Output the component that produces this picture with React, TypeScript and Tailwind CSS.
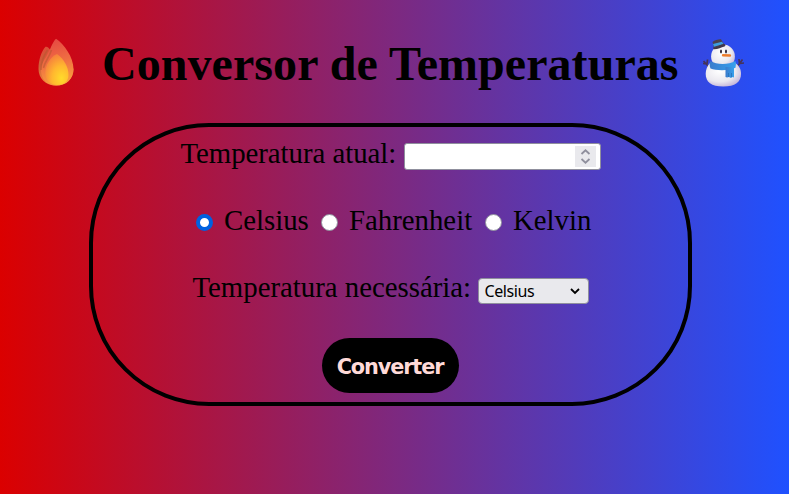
import React from "react";

function Flame() {
  return (
    <svg className="block h-12 w-9 shrink-0" viewBox="0 0 36 48">
      <defs>
        <linearGradient id="flameBack" x1="0" y1="0" x2="0.3" y2="1">
          <stop offset="0" stopColor="#e04a38" />
          <stop offset="0.45" stopColor="#d0603a" />
          <stop offset="1" stopColor="#f58b38" />
        </linearGradient>
        <linearGradient id="flameMain" x1="0.4" y1="0" x2="0.6" y2="1">
          <stop offset="0" stopColor="#e54843" />
          <stop offset="0.5" stopColor="#f06f42" />
          <stop offset="1" stopColor="#f9a43d" />
        </linearGradient>
        <radialGradient id="flameCore" cx="0.7" cy="0.78" r="0.8">
          <stop offset="0" stopColor="#ffdb2b" />
          <stop offset="0.5" stopColor="#ffb72f" />
          <stop offset="1" stopColor="#f6803d" />
        </radialGradient>
      </defs>
      <path d="M7.500 8.800C3.500 13 .5 22 .5 31c0 9 7 16.500 17.500 16.500S35.500 40 35.500 31L20 9 12 11.500C10.500 9.500 9 8.200 7.500 8.800Z" fill="url(#flameBack)" />
      <path d="M18 .700C26 6 35.500 19 35.500 31c0 10-7 16.500-17 16.500C9 47.500 3 41 3 32c0-7 4-10 7-17 3-5 4.500-11 8-14.300Z" fill="url(#flameMain)" />
      <path d="M9.500 12c-4 6-6.500 12-6.500 20M13.500 12C11 20 7 23 5.500 30" fill="none" stroke="#b5572f" strokeWidth="1.6" opacity=".55" />
      <path d="M19 16c7 5 11.500 13 11.500 21 0 6-4 10-11 10C12 47 7.300 42 7.300 35c0-8 5-16 11.700-19Z" fill="url(#flameCore)" />
    </svg>
  );
}

function Snowman() {
  return (
    <svg className="block h-12 w-[41px] shrink-0" viewBox="0 0 41 48">
      <defs>
        <radialGradient id="snowBody" cx="0.4" cy="0.35" r="0.75">
          <stop offset="0" stopColor="#fff" />
          <stop offset="0.6" stopColor="#eae8ef" />
          <stop offset="1" stopColor="#bba9d5" />
        </radialGradient>
        <linearGradient id="scarf" x1="0" y1="0" x2="1" y2="0">
          <stop offset="0" stopColor="#3a7ccc" />
          <stop offset="1" stopColor="#36a0ed" />
        </linearGradient>
      </defs>
      <path d="M6 28 .5 22M3.500 25l-3.500-.500M4 25l.500-4.500M34 28l5.500-7.500M36.500 25l-.500-5M37 24.500l4-.500" fill="none" stroke="#453359" strokeWidth="1.7" />
      <path d="M7 24c-3 3-4.300 7-4.300 11 0 8 5.500 12.500 17.500 12.500S38 43 38 35c0-5-2-8-5.500-11Z" fill="url(#snowBody)" />
      <circle cx="20" cy="17.500" r="11.900" fill="url(#snowBody)" />
      <path d="M7.500 22c6 4 18 4 25 0q1 3 0 6.800c-6 3-19 3.200-25 .700-1-2-1.200-5.500 0-7.500Z" fill="url(#scarf)" />
      <path d="M22.500 28H31v10.500l-1.500-.500-1.500 1-2-1-2 .500-1.500-.500Z" fill="url(#scarf)" />
      <path d="M25.500 34v4M28.500 34v4" stroke="#2771b8" strokeWidth=".8" />
      <ellipse cx="18" cy="12.500" rx="1" ry="1.900" fill="#342b3b" />
      <ellipse cx="23" cy="12.500" rx="1" ry="1.900" fill="#342b3b" />
      <path d="m19.500 15 8 .200q1.500 1.400 0 2.600l-8-.200q-1.500-1.200 0-2.600Z" fill="#ec7b2b" />
      <path d="M9.500 3C11.500 1 15.500 0 18 .200l3.500 5.800-10.500 3Z" fill="#4b4050" />
      <path d="m10 5 9-2.300 1.500 2.300-9.500 2.800Z" fill="#3c9de0" />
      <path d="M10 8.500c4-.300 7-2.800 11.500-3.600 1.500.500 1 2 0 2.500-3.500 1-7 3.200-11 2.900Z" fill="#40364a" />
    </svg>
  );
}

export default function App() {
  return (
    <main className="h-[494px] w-[789px] overflow-hidden bg-[linear-gradient(to_right,#db0000,#1f51ff)] font-['Liberation_Serif',serif] text-black">
      <header className="flex h-[123px] items-start pl-[38px] pt-[38px]">
        <Flame />
        <h1 className="ml-7 -mt-0.5 w-[577px] whitespace-nowrap text-[48px] leading-[56px] font-bold tracking-[0.06px]">Conversor de Temperaturas</h1>
        <div className="ml-6 mt-px"><Snowman /></div>
      </header>
      <form className="ml-[89px] flex h-[283px] w-[603px] flex-col items-center rounded-[120px] border-4 border-black pt-2.5 text-[28.8px] leading-[33px]" onSubmit={(e) => e.preventDefault()}>
        <div className="flex h-[33px] w-[420px] items-center">
          <label htmlFor="temperature" className="w-[223px] whitespace-nowrap tracking-[-0.03px]">Temperatura atual:</label>
          <div className="mt-[5px] flex h-[27px] w-[197px] items-center rounded-[3px] border border-[#8f8f9d] bg-white pr-1">
            <input id="temperature" className="min-w-0 flex-1 bg-transparent px-1 text-base outline-none" />
            <svg className="h-[21px] w-[21px] bg-[#e9e9ed]" viewBox="0 0 21 21" fill="none" stroke="#8f8f9d" strokeWidth="1.8">
              <path d="m6.500 8 4-3.700 4 3.700M6.500 13l4 3.700 4-3.700" />
            </svg>
          </div>
        </div>
        <div className="ml-[6px] mt-[34px] flex h-[33px] w-[395px] items-center whitespace-nowrap">
          <span className="mt-1 h-[17px] w-[17px] shrink-0 rounded-full border-4 border-[#0061e0] bg-white" />
          <label className="ml-[11px] w-[97px] shrink-0">Celsius</label>
          <span className="mt-1 h-[17px] w-[17px] shrink-0 rounded-full border border-[#8f8f9d] bg-white" />
          <label className="ml-[11px] w-[136px] shrink-0">Fahrenheit</label>
          <span className="mt-1 h-[17px] w-[17px] shrink-0 rounded-full border border-[#8f8f9d] bg-white" />
          <label className="ml-[11px]">Kelvin</label>
        </div>
        <div className="mt-[34px] flex h-[33px] w-[396px] items-center">
          <label className="w-[285px] whitespace-nowrap">Temperatura necessária:</label>
          <button type="button" className="mt-[7px] flex h-[26px] w-[111px] items-center justify-between rounded border border-[#8f8f9d] bg-[#e9e9ed] pl-1.5 pr-[7px] font-['Noto_Sans',sans-serif] text-base leading-6 tracking-[-0.4px]">
            <span>Celsius</span>
            <svg className="h-3 w-3" viewBox="0 0 12 12" fill="none" stroke="black" strokeWidth="1.8"><path d="m2 4 4 4 4-4" /></svg>
          </button>
        </div>
        <button className="mt-[34px] h-[55px] w-[137px] rounded-[28px] bg-black pt-[3px] pr-px font-['DejaVu_Sans',sans-serif] text-[20.8px] font-bold tracking-[-1.1px] text-[#ffdad8]">Converter</button>
      </form>
    </main>
  );
}
